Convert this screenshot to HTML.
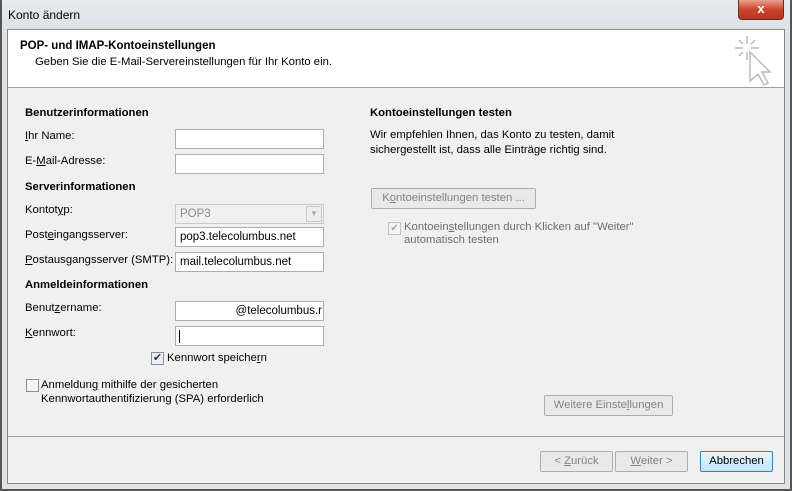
<!DOCTYPE html>
<html><head><meta charset="utf-8"><style>
*{margin:0;padding:0;box-sizing:border-box}
body{width:792px;height:491px;position:relative;overflow:hidden;background:#dfe3e8;font-family:"Liberation Sans",sans-serif;font-size:11.3px;color:#000}
.a{position:absolute;white-space:nowrap}
.in{position:absolute;background:#fff;border:1px solid #abadb3;height:20px;left:175px;width:149px;padding:3px 4px;font-size:11.5px}
.btn{position:absolute;height:21px;border:1px solid #adadad;background:#e9e9e9;border-radius:2px;text-align:center;line-height:19px;color:#838383}
.b{font-weight:bold}
u{text-decoration:underline}
</style></head><body>
<div class="a" style="left:0;top:0;width:792px;height:30px;background:linear-gradient(#e8eaed,#dde1e6)"></div>
<div class="a" style="left:0;top:0;width:2px;height:491px;background:#555"></div>
<div class="a" style="left:790px;top:0;width:2px;height:491px;background:#555"></div>
<div class="a" style="left:0;top:489px;width:792px;height:2px;background:#555"></div>
<div class="a" style="left:8px;top:8px;font-size:12px">Konto ändern</div>
<div class="a" style="left:738px;top:0;width:46px;height:20px;background:linear-gradient(#e8a192,#c9452e 50%,#b93520);border:1px solid #6b2a1f;border-top:none;border-radius:0 0 4px 4px;color:#fff;text-align:center;font-weight:bold;font-size:13px;line-height:18px">x</div>
<div class="a" style="left:7px;top:29px;width:778px;height:455px;background:#f0f0f0;border:1px solid #888"></div>
<div class="a" style="left:8px;top:30px;width:776px;height:58px;background:#fff;border-bottom:1px solid #a0a0a0"></div>
<div class="a b" style="left:20px;top:40px;font-size:11.5px">POP- und IMAP-Kontoeinstellungen</div>
<div class="a" style="left:35px;top:56px">Geben Sie die E-Mail-Servereinstellungen für Ihr Konto ein.</div>
<svg class="a" style="left:734px;top:34px" width="44" height="54" viewBox="0 0 44 54" fill="none" stroke="#bbb" stroke-width="1.5">
<path d="M13 2v8M13 18v8M1 14h8M17 14h8M5 6l4 4M21 6l-4 4M5 22l4-4"/>
<path d="M16 18l20 20h-8l6 11-4 2-6-11-8 7z" fill="#fff"/>
</svg>
<div class="a b" style="left:25px;top:107px">Benutzerinformationen</div>
<div class="a" style="left:25px;top:130px"><u>I</u>hr Name:</div>
<div class="in" style="top:129px"></div>
<div class="a" style="left:25px;top:155px">E-<u>M</u>ail-Adresse:</div>
<div class="in" style="top:154px"></div>
<div class="a b" style="left:25px;top:181px">Serverinformationen</div>
<div class="a" style="left:25px;top:204px">Kontot<u>y</u>p:</div>
<div class="in" style="top:204px;background:#f0f0f0;border-color:#c5cbd3;color:#888">POP3<div style="position:absolute;right:1px;top:1px;width:16px;height:16px;border:1px solid #c8c8c8;background:#eee;font-size:8px;line-height:14px;text-align:center;color:#aaa">▼</div></div>
<div class="a" style="left:25px;top:229px">Post<u>e</u>ingangsserver:</div>
<div class="in" style="top:227px">pop3.telecolumbus.net</div>
<div class="a" style="left:25px;top:254px"><u>P</u>ostausgangsserver (SMTP):</div>
<div class="in" style="top:252px">mail.telecolumbus.net</div>
<div class="a b" style="left:25px;top:279px">Anmeldeinformationen</div>
<div class="a" style="left:25px;top:302px">Benut<u>z</u>ername:</div>
<div class="in" style="top:301px;text-align:right;padding-right:1px;overflow:hidden">@telecolumbus.r</div>
<div class="a" style="left:25px;top:327px"><u>K</u>ennwort:</div>
<div class="in" style="top:326px"><div style="position:absolute;left:3px;top:3px;width:1px;height:13px;background:#000"></div></div>
<div class="a" style="left:151px;top:352px;width:13px;height:13px;border:1px solid #8e8f8f;background:#e8eef8;color:#334;font-size:11px;line-height:11px;text-align:center">✔</div>
<div class="a" style="left:167px;top:352px">Kennwort speiche<u>r</u>n</div>
<div class="a" style="left:26px;top:379px;width:13px;height:13px;border:1px solid #8e8f8f;background:#f4f4f4"></div>
<div class="a" style="left:41px;top:378px;line-height:14px">Anmeldun<u>g</u> mithilfe der gesicherten<br>Kennwortauthentifizierung (SPA) erforderlich</div>
<div class="a b" style="left:370px;top:107px">Kontoeinstellungen testen</div>
<div class="a" style="left:370px;top:128px;line-height:15px">Wir empfehlen Ihnen, das Konto zu testen, damit<br>sichergestellt ist, dass alle Einträge richtig sind.</div>
<div class="btn" style="left:371px;top:188px;width:165px">K<u>o</u>ntoeinstellungen testen ...</div>
<div class="a" style="left:388px;top:222px;width:13px;height:13px;border:1px solid #c0c0c0;background:#f4f4f4;color:#aaa;font-size:10px;line-height:11px;text-align:center">✔</div>
<div class="a" style="left:404px;top:221px;line-height:13px;color:#6d6d6d">Kontoein<u>s</u>tellungen durch Klicken auf "Weiter"<br>automatisch testen</div>
<div class="btn" style="left:544px;top:395px;width:129px">Weitere Einste<u>l</u>lungen</div>
<div class="a" style="left:8px;top:436px;width:776px;height:1px;background:#a0a0a0"></div>
<div class="btn" style="left:540px;top:451px;width:73px">&lt; <u>Z</u>urück</div>
<div class="btn" style="left:615px;top:451px;width:73px"><u>W</u>eiter &gt;</div>
<div class="btn" style="left:700px;top:451px;width:73px;border-color:#3c7fb1;background:linear-gradient(#eaf6fd,#bee6fd);color:#000">Abbrechen</div>
</body></html>
